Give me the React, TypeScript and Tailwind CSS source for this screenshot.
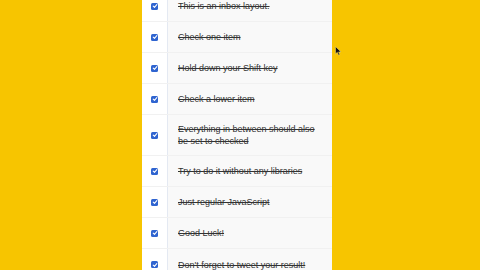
import React from 'react';

const items = [
  'This is an inbox layout.',
  'Check one item',
  'Hold down your Shift key',
  'Check a lower item',
  'Everything in between should also be set to checked',
  'Try to do it without any libraries',
  'Just regular JavaScript',
  'Good Luck!',
  "Don't forget to tweet your result!",
];

function Checkbox() {
  return (
    <div className="flex h-[7px] w-[7px] items-center justify-center rounded-[1.5px] bg-[#2f64d0]">
      <svg viewBox="0 0 8 8" className="h-[6px] w-[6px]">
        <path d="M1.6 4.2 L3.3 5.8 L6.4 2.2" fill="none" stroke="white" strokeWidth="1.4" strokeLinecap="round" strokeLinejoin="round" />
      </svg>
    </div>
  );
}

export default function App() {
  return (
    <div className="relative h-[270px] w-[480px] overflow-hidden bg-[#f7c500]" style={{ fontFamily: '"Liberation Sans", Arial, sans-serif' }}>
      <div className="ml-[142px] mt-[-9px] w-[190px] bg-white">
        {items.map((text, i) => (
          <div
            key={i}
            className={`flex min-h-[31px] items-stretch ${i < items.length - 1 ? 'border-b border-[#f1f1f1]' : ''}`}
          >
            <div className="flex w-[25px] flex-shrink-0 items-center justify-center">
              <Checkbox />
            </div>
            <p className="flex flex-1 items-center border-l border-[#e4e9f2] bg-[#f9f9f9] py-[8px] pl-[10px] pr-[10px] text-[9px] leading-[12px] text-[#333] line-through">
              {text}
            </p>
          </div>
        ))}
      </div>
      {/* mouse cursor */}
      <svg className="absolute left-[335px] top-[46px] h-[10px] w-[7px]" viewBox="0 0 7 10">
        <path d="M0.5 0.5 L0.5 8 L2.3 6.3 L3.6 9.3 L4.8 8.8 L3.6 5.9 L6 5.9 Z" fill="#111" stroke="#f7e07a" strokeWidth="0.5" />
      </svg>
    </div>
  );
}
